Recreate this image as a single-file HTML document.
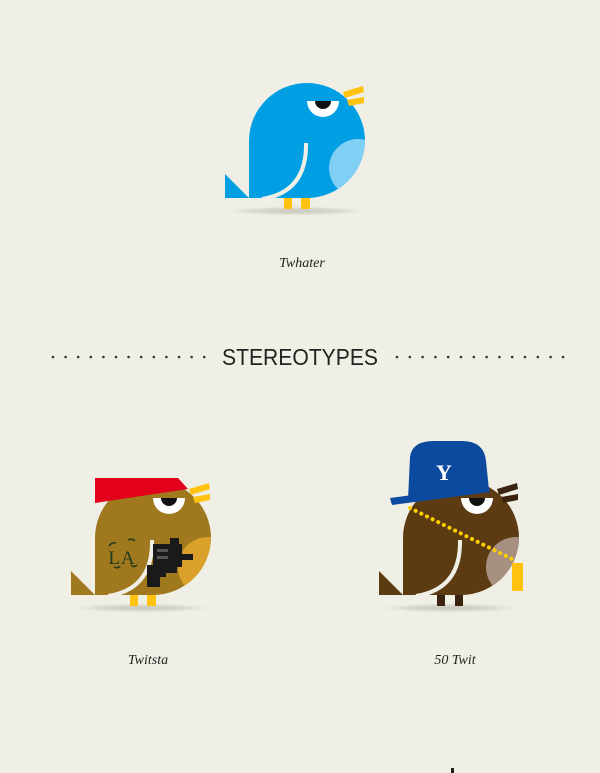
<!DOCTYPE html>
<html><head><meta charset="utf-8"><style>
html,body{margin:0;padding:0;background:#F0EFE5;}
svg{display:block}
</style></head><body>
<svg width="600" height="773" viewBox="0 0 600 773" xmlns="http://www.w3.org/2000/svg">
<defs>
<clipPath id="bodyc"><path d="M249,198 V141 A58,58 0 0 1 365,141 A58,58 0 0 1 307,198 Z"/></clipPath>
<clipPath id="eyec"><rect x="300" y="101" width="50" height="30"/></clipPath>
<radialGradient id="sh" cx="50%" cy="50%" r="50%"><stop offset="0" stop-color="#c9c8bf"/><stop offset="0.6" stop-color="#dcdbd2"/><stop offset="1" stop-color="#F0EFE5" stop-opacity="0"/></radialGradient>
</defs>
<rect width="600" height="773" fill="#F0EFE5"/>

<!-- Blue bird -->
<g>
<ellipse cx="296" cy="211" rx="76" ry="5" fill="url(#sh)"/>
<rect x="284" y="196" width="8" height="13" fill="#FFC20E"/>
<rect x="301" y="196" width="9" height="13" fill="#FFC20E"/>
<polygon points="225,174 225,198 249,198" fill="#009FE3"/>
<path d="M249,198 V141 A58,58 0 0 1 365,141 A58,58 0 0 1 307,198 Z" fill="#009FE3"/>
<circle cx="358" cy="168" r="29" fill="#82CFF5" clip-path="url(#bodyc)"/>
<path d="M306,143 Q307,192 262,199" stroke="#F0EFE5" stroke-width="4" fill="none"/>
<g clip-path="url(#eyec)"><circle cx="323" cy="101" r="16" fill="#fff"/><circle cx="323" cy="101" r="8" fill="#111"/></g>
<polygon points="343,92 363,86 364,92 345,98" fill="#FFC20E"/>
<polygon points="347,100 364,97 364,103 349,106" fill="#FFC20E"/>
</g>

<text x="302" y="267" font-family="Liberation Serif,serif" font-style="italic" font-size="14" text-anchor="middle" fill="#222">Twhater</text>

<!-- heading -->
<g fill="#333">
<circle cx="53" cy="357" r="1.3"/><circle cx="65.6" cy="357" r="1.3"/><circle cx="78.2" cy="357" r="1.3"/><circle cx="90.8" cy="357" r="1.3"/><circle cx="103.4" cy="357" r="1.3"/><circle cx="116" cy="357" r="1.3"/><circle cx="128.6" cy="357" r="1.3"/><circle cx="141.2" cy="357" r="1.3"/><circle cx="153.8" cy="357" r="1.3"/><circle cx="166.4" cy="357" r="1.3"/><circle cx="179" cy="357" r="1.3"/><circle cx="191.6" cy="357" r="1.3"/><circle cx="204.2" cy="357" r="1.3"/>
<circle cx="397" cy="357" r="1.3"/><circle cx="409.8" cy="357" r="1.3"/><circle cx="422.6" cy="357" r="1.3"/><circle cx="435.4" cy="357" r="1.3"/><circle cx="448.2" cy="357" r="1.3"/><circle cx="461" cy="357" r="1.3"/><circle cx="473.8" cy="357" r="1.3"/><circle cx="486.6" cy="357" r="1.3"/><circle cx="499.4" cy="357" r="1.3"/><circle cx="512.2" cy="357" r="1.3"/><circle cx="525" cy="357" r="1.3"/><circle cx="537.8" cy="357" r="1.3"/><circle cx="550.6" cy="357" r="1.3"/><circle cx="563" cy="357" r="1.3"/>
</g>
<text x="300" y="365" font-family="Liberation Sans,sans-serif" font-size="23" text-anchor="middle" fill="#222" textLength="156" lengthAdjust="spacingAndGlyphs">STEREOTYPES</text>

<!-- Twitsta -->
<g transform="translate(-154,397)">
<ellipse cx="296" cy="211" rx="76" ry="5" fill="url(#sh)"/>
<rect x="284" y="196" width="8" height="13" fill="#FFC20E"/>
<rect x="301" y="196" width="9" height="13" fill="#FFC20E"/>
<polygon points="225,174 225,198 249,198" fill="#A0781E"/>
<path d="M249,198 V141 A58,58 0 0 1 365,141 A58,58 0 0 1 307,198 Z" fill="#A0781E"/>
<circle cx="362" cy="170" r="30" fill="#D9A02A" clip-path="url(#bodyc)"/>
<polygon points="249,81 332,81 342,92 249,106" fill="#E2001A"/>
<path d="M306,143 Q307,192 262,199" stroke="#F0EFE5" stroke-width="4" fill="none"/>
<g clip-path="url(#eyec)"><circle cx="323" cy="101" r="16" fill="#fff"/><circle cx="323" cy="101" r="8" fill="#111"/></g>
<polygon points="343,92 363,86 364,92 345,98" fill="#FFC20E"/>
<polygon points="347,100 364,97 364,103 349,106" fill="#FFC20E"/>
<path d="M307,147 H324 V141 H333 V147 H336 V157 H347 V163 H336 V170 H331 V176 H320 V180 H314 V190 H301 V168 H307 Z" fill="#1a1a1a"/>
<rect x="311" y="152" width="11" height="3" fill="#555"/><rect x="311" y="159" width="11" height="3" fill="#555"/>
<text x="276" y="167" font-family="Liberation Serif,serif" font-size="19" text-anchor="middle" fill="#1F3A1F" letter-spacing="1">LA</text>
<path d="M263,149 q3,-4 7,-3 M282,143 q4,-2 7,1 M268,170 q4,2 6,-1 M285,168 q3,3 6,0" stroke="#1F3A1F" stroke-width="1.5" fill="none"/>
</g>
<text x="148" y="664" font-family="Liberation Serif,serif" font-style="italic" font-size="14" text-anchor="middle" fill="#222">Twitsta</text>

<!-- 50 Twit -->
<g transform="translate(154,397)">
<ellipse cx="296" cy="211" rx="76" ry="5" fill="url(#sh)"/>
<rect x="283" y="196" width="8" height="13" fill="#3A2410"/>
<rect x="301" y="196" width="8" height="13" fill="#3A2410"/>
<polygon points="225,174 225,198 249,198" fill="#5C3A12"/>
<path d="M249,198 V141 A58,58 0 0 1 365,141 A58,58 0 0 1 307,198 Z" fill="#5C3A12"/>
<circle cx="362" cy="170" r="30" fill="#A89080" clip-path="url(#bodyc)"/>
<path d="M306,143 Q307,192 262,199" stroke="#F0EFE5" stroke-width="4" fill="none"/>
<g clip-path="url(#eyec)"><circle cx="323" cy="101" r="16" fill="#fff"/><circle cx="323" cy="101" r="8" fill="#111"/></g>
<polygon points="343,92 363,86 364,92 345,98" fill="#3A2410"/>
<polygon points="347,100 364,97 364,103 349,106" fill="#3A2410"/>
<path d="M256,111 L360,163" stroke="#FFD000" stroke-width="4" stroke-dasharray="0.1 6.2" stroke-linecap="round" fill="none"/>
<rect x="358" y="166" width="11" height="28" fill="#FFC20E"/>
<path d="M254,103 L256,60 Q258,44 280,44 L308,44 Q330,44 332,64 L335,93 Z" fill="#0B4A9E"/>
<polygon points="236,101 334,88 336,95 238,108" fill="#0B4A9E"/>
<text x="290" y="83" font-family="Liberation Serif,serif" font-weight="bold" font-size="22" text-anchor="middle" fill="#fff">Y</text>
</g>
<text x="455" y="664" font-family="Liberation Serif,serif" font-style="italic" font-size="14" text-anchor="middle" fill="#222">50 Twit</text>

<rect x="451" y="768" width="3" height="5" fill="#222"/>
</svg>
</body></html>
